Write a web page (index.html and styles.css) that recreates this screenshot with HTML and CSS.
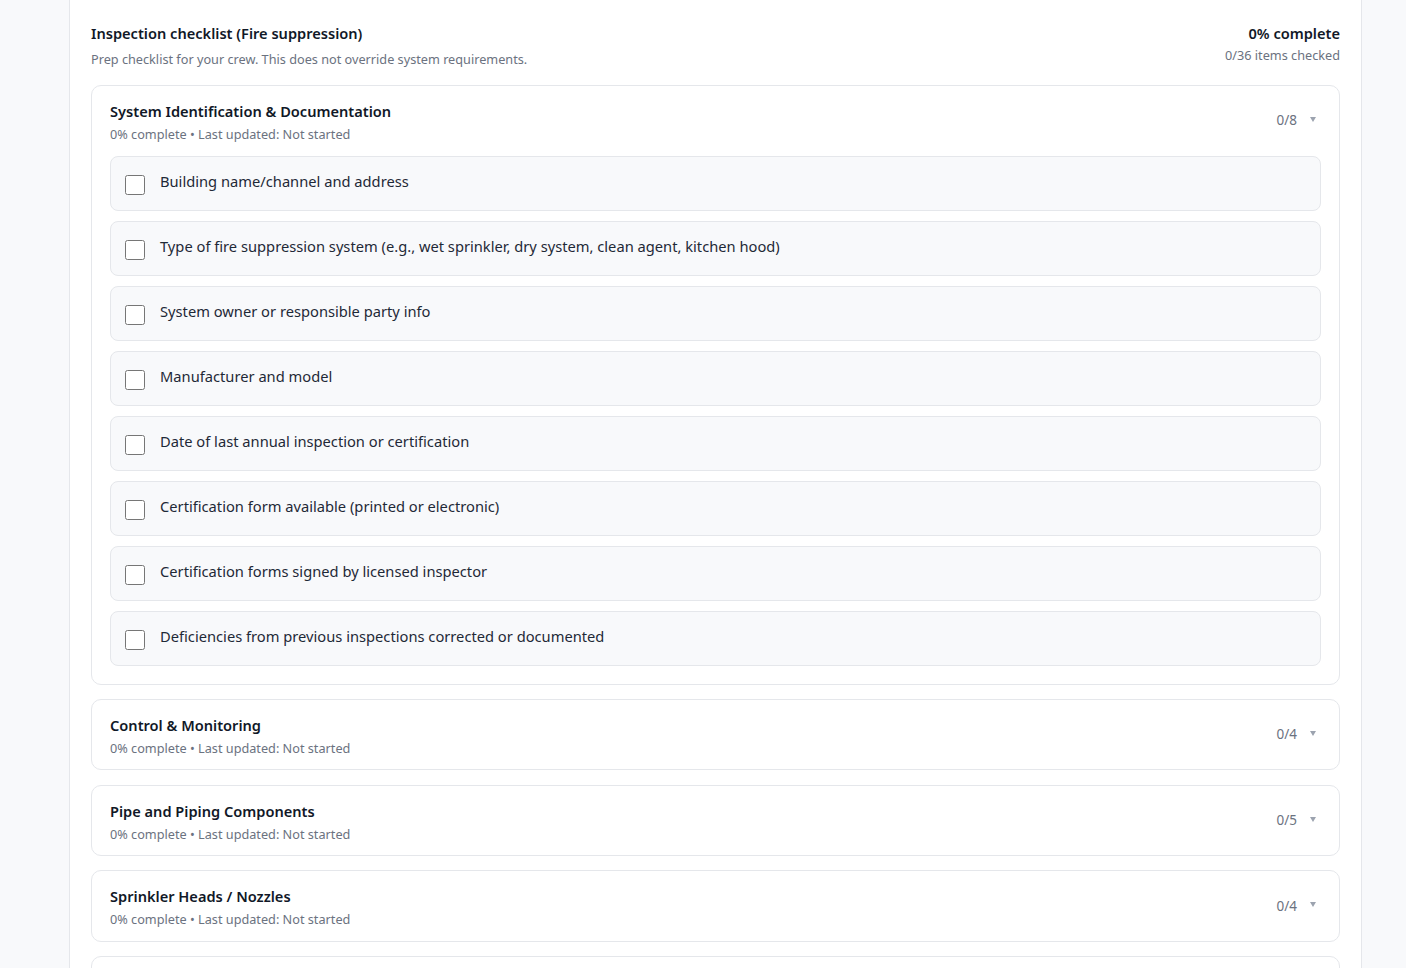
FILE: index.html
```html
<!DOCTYPE html>
<html>
<head>
    <meta charset="UTF-8">
    <title>Inspection checklist</title>
    <link rel="stylesheet" href="styles.css">
</head>
<body>
<div class="page">
    <div class="checklist">
        <div class="checklist-head">
            <div>
                <h1 class="checklist-title">Inspection checklist (Fire suppression)</h1>
                <p class="checklist-note">Prep checklist for your crew. This does not override system requirements.</p>
            </div>
            <div class="progress">
                <div class="progress-pct">0% complete</div>
                <div class="progress-count">0/36 items checked</div>
            </div>
        </div>

        <div class="section open">
            <div class="section-head">
                <div>
                    <h2 class="section-title">System Identification &amp; Documentation</h2>
                    <div class="section-meta">0% complete &bull; Last updated: Not started</div>
                </div>
                <div class="section-side"><span class="count">0/8</span><span class="caret"></span></div>
            </div>
            <ul class="items">
                <li class="item"><input type="checkbox"><span>Building name/channel and address</span></li>
                <li class="item"><input type="checkbox"><span>Type of fire suppression system (e.g., wet sprinkler, dry system, clean agent, kitchen hood)</span></li>
                <li class="item"><input type="checkbox"><span>System owner or responsible party info</span></li>
                <li class="item"><input type="checkbox"><span>Manufacturer and model</span></li>
                <li class="item"><input type="checkbox"><span>Date of last annual inspection or certification</span></li>
                <li class="item"><input type="checkbox"><span>Certification form available (printed or electronic)</span></li>
                <li class="item"><input type="checkbox"><span>Certification forms signed by licensed inspector</span></li>
                <li class="item"><input type="checkbox"><span>Deficiencies from previous inspections corrected or documented</span></li>
            </ul>
        </div>

        <div class="section">
            <div class="section-head">
                <div>
                    <h2 class="section-title">Control &amp; Monitoring</h2>
                    <div class="section-meta">0% complete &bull; Last updated: Not started</div>
                </div>
                <div class="section-side"><span class="count">0/4</span><span class="caret"></span></div>
            </div>
        </div>

        <div class="section">
            <div class="section-head">
                <div>
                    <h2 class="section-title">Pipe and Piping Components</h2>
                    <div class="section-meta">0% complete &bull; Last updated: Not started</div>
                </div>
                <div class="section-side"><span class="count">0/5</span><span class="caret"></span></div>
            </div>
        </div>

        <div class="section">
            <div class="section-head">
                <div>
                    <h2 class="section-title">Sprinkler Heads / Nozzles</h2>
                    <div class="section-meta">0% complete &bull; Last updated: Not started</div>
                </div>
                <div class="section-side"><span class="count">0/4</span><span class="caret"></span></div>
            </div>
        </div>

        <div class="section">
            <div class="section-head">
                <div>
                    <h2 class="section-title">Alarms &amp; Signals</h2>
                    <div class="section-meta">0% complete &bull; Last updated: Not started</div>
                </div>
                <div class="section-side"><span class="count">0/5</span><span class="caret"></span></div>
            </div>
        </div>
    </div>
</div>
</body>
</html>
```

FILE: styles.css
```css
html, body, div, ul, li, h1, h2, p {
    margin: 0;
    padding: 0;
    list-style: none;
}

body {
    background: #f8f9fb;
    font-family: "Noto Sans", "Open Sans", sans-serif;
    color: #111827;
    overflow: hidden;
}

.page {
    margin: 0 44px 0 69px;
}

.checklist {
    background: #fff;
    border: 1px solid #e5e7eb;
    border-top: none;
    border-radius: 0 0 12px 12px;
    padding: 22px 21px 40px;
    display: flex;
    flex-direction: column;
    gap: 14.2px;
}

.checklist-head {
    display: flex;
    justify-content: space-between;
    align-items: flex-start;
    margin-bottom: 2.5px;
}

.checklist-title {
    font-size: 14.6px;
    font-weight: 600;
    line-height: 22px;
}

.checklist-note {
    font-size: 12.7px;
    line-height: 18px;
    color: #6b7280;
    margin-top: 6px;
}

.progress {
    text-align: right;
}

.progress-pct {
    font-size: 14.6px;
    font-weight: 600;
    line-height: 22px;
}

.progress-count {
    font-size: 12.7px;
    line-height: 18px;
    color: #6b7280;
    margin-top: 2px;
}

.section {
    border: 1px solid #e5e7eb;
    border-radius: 10px;
    background: #fff;
}

.section-head {
    display: flex;
    justify-content: space-between;
    align-items: center;
    padding: 14px 18px 11.5px;
}

.section-title {
    font-size: 14.6px;
    font-weight: 600;
    line-height: 22px;
}

.section-meta {
    font-size: 12.7px;
    line-height: 20px;
    color: #6b7280;
    margin-top: 2px;
}

.section-side {
    display: flex;
    align-items: center;
    gap: 13px;
    padding-right: 5px;
    margin-bottom: 3px;
    color: #6b7280;
    font-size: 13.5px;
}

.caret {
    width: 0;
    height: 0;
    border-left: 3px solid transparent;
    border-right: 3px solid transparent;
    border-top: 5px solid #9ca3af;
    margin-top: -2px;
}

.items {
    display: flex;
    flex-direction: column;
    gap: 10px;
    padding: 0.5px 18px 18px;
}

.item {
    display: flex;
    align-items: flex-start;
    gap: 15px;
    background: #f8f9fb;
    border: 1px solid #e5e7eb;
    border-radius: 8px;
    padding: 13px 14px 15px;
    font-size: 14.7px;
    line-height: 22px;
    color: #1f2937;
}

.item input {
    width: 20px;
    height: 20px;
    margin: 5px 0 0;
    flex: none;
}
```
